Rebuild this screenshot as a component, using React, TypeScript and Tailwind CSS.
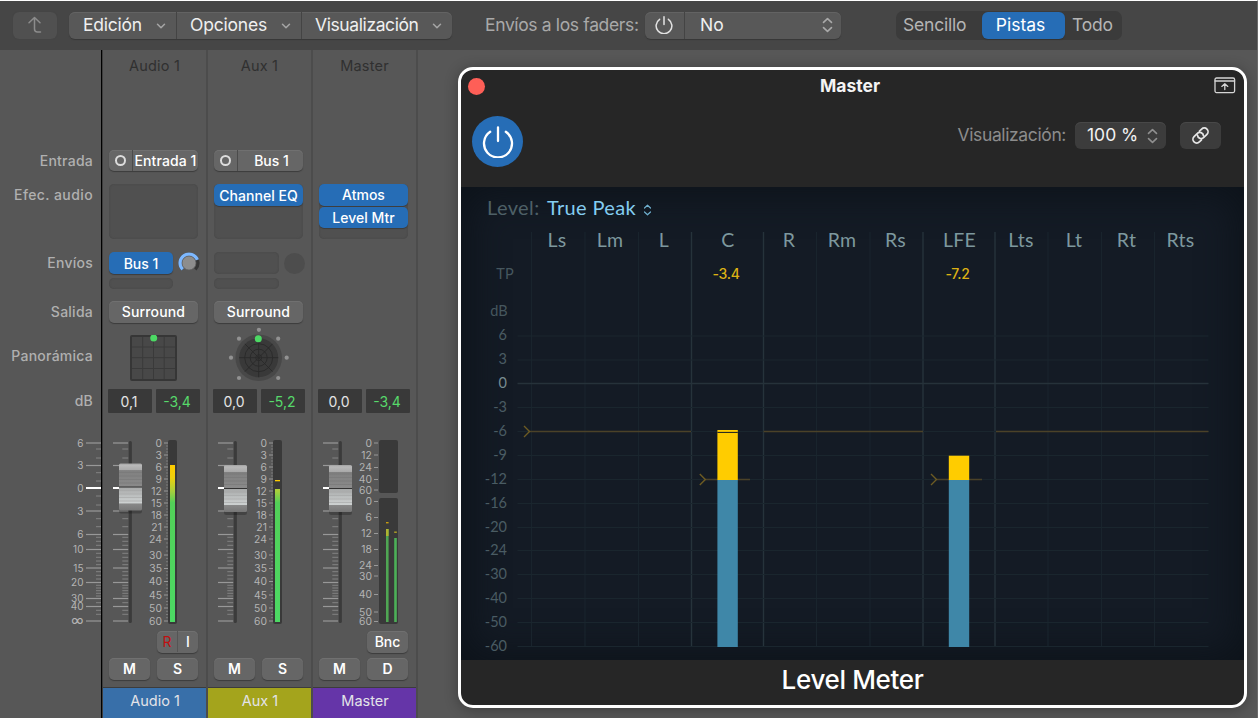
import type { ReactNode } from 'react';
import { ChevronDown } from 'lucide-react';

const ROWS = 'grid grid-rows-[100px_34px_68px_49px_34px_54px_41px_201px_27px_29px_31px]';
const SLOT = 'rounded-[5px] bg-[#505050] shadow-[inset_0_0_2px_#444]';
const BTN = 'flex items-center justify-center rounded-[5px] bg-[#666] text-white shadow-[0_1px_1px_#3c3c3c,inset_0_1px_0_#707070]';
const BLUE = 'flex items-center justify-center rounded-[5px] bg-[#266db6] text-white shadow-[0_1px_1px_#3c3c3c]';

const MAIN_TICKS = [443, 465.5, 488, 511, 534.5, 549.5, 568, 582.5, 598.5, 606.5, 621];
const MINOR_TICKS = [
  449, 458, 472.7, 481, 496, 505, 518.7, 526.7, 537.3, 541.3, 545.3, 553.3, 557.3, 561, 564.7,
  571.7, 575.3, 579, 585.3, 588, 590.7, 593.3, 596, 602.7, 610.3, 614.3,
];
const FADER_LABELS = ['6', '3', '0', '3', '6', '10', '15', '20', '30', '40', '∞'];

type Mark = [string, number];

const CHANNEL_MARKS: Mark[] = [
  ['0', 443], ['3', 455], ['6', 467], ['9', 479], ['12', 491], ['15', 503], ['18', 515], ['21', 527],
  ['24', 539], ['30', 555], ['35', 568.5], ['40', 581.5], ['45', 595], ['50', 608], ['60', 621],
];
const MASTER_MARKS: Mark[] = [
  ['0', 443], ['12', 455], ['24', 467.5], ['40', 479.5], ['60', 490],
  ['0', 501.5], ['6', 517.5], ['12', 533.5], ['18', 549.5], ['24', 565.5], ['30', 576], ['40', 594.5], ['50', 612], ['60', 621.5],
];

const UpDown = ({ className }: { className: string }) => (
  <svg viewBox="0 0 12 18" className={className} fill="none" stroke="currentColor" strokeWidth="1.8" strokeLinecap="round" strokeLinejoin="round">
    <path d="M1.5 6 6 1.8 10.5 6M1.5 12 6 16.2 10.5 12" />
  </svg>
);

const PowerIcon = ({ className, width }: { className: string; width: number }) => (
  <svg viewBox="0 0 32 32" className={className} fill="none" stroke="currentColor" strokeWidth={width} strokeLinecap="round">
    <path d="M16 1.5V15M8.2 5.8A14 14 0 1 0 23.8 5.8" />
  </svg>
);

const TickMarks = ({ from, to, minor }: { from: number; to: number; minor: number }) => (
  <g stroke="#929292" strokeWidth="1">
    {MINOR_TICKS.map(y => <path key={y} d={`M${minor} ${y}H${to}`} stroke="#838383" />)}
    {MAIN_TICKS.map(y => (
      <path key={y} d={`M${from} ${y}H${to}`} stroke={y === 488 ? '#fff' : '#989898'} strokeWidth={y === 488 ? 2 : 1.2} />
    ))}
  </g>
);

const Fader = ({ cap, marks, children }: { cap: number; marks: Mark[]; children: ReactNode }) => (
  <svg viewBox="0 430 103 201" className="h-[201px] w-[103px]">
    <defs>
      <linearGradient id="cap" x1="0" y1="0" x2="0" y2="1">
        <stop offset="0" stopColor="#a2a2a2" />
        <stop offset=".04" stopColor="#b9b9b9" />
        <stop offset=".14" stopColor="#aaa" />
        <stop offset=".15" stopColor="#808080" />
        <stop offset=".49" stopColor="#8a8a8a" />
        <stop offset=".52" stopColor="#a9abab" />
        <stop offset=".84" stopColor="#ced2d2" />
        <stop offset=".86" stopColor="#888" />
        <stop offset="1" stopColor="#777" />
      </linearGradient>
      <linearGradient id="level" gradientUnits="userSpaceOnUse" x1="0" y1="465" x2="0" y2="622">
        <stop offset="0" stopColor="#ffcc00" />
        <stop offset=".08" stopColor="#eed00c" />
        <stop offset=".17" stopColor="#a4cf3e" />
        <stop offset=".24" stopColor="#52d058" />
        <stop offset="1" stopColor="#4cd964" />
      </linearGradient>
    </defs>
    <TickMarks from={10} to={25.3} minor={19.3} />
    <rect x="25.7" y="441" width="3.2" height="182" rx="1.5" fill="#3b3b3b" />
    <rect x="16" y={cap + 3} width="23" height="47" rx="2" fill="#000" opacity=".22" />
    <rect x="16" y={cap} width="23" height="47" rx="1.5" fill="url(#cap)" />
    {[9, 12.5, 16, 19.5].map(d => <path key={d} d={`M16 ${cap + d}h23`} stroke="#777" strokeWidth=".6" />)}
    {[27, 30.5, 34, 37.5].map(d => <path key={d} d={`M16 ${cap + d}h23`} stroke="#a4a6a6" strokeWidth=".6" />)}
    <path d={`M16 ${cap + 23.5}h23`} stroke="#333" />
    {marks.map(([label, y]) => (
      <g key={y}>
        <text x="59" y={y + 3.7} textAnchor="end" fill="#b4b4b4" fontSize="10.3" letterSpacing=".1">{label}</text>
        <path d={`M61 ${y}h4`} stroke="#999" />
      </g>
    ))}
    {children}
  </svg>
);

const ChannelMeter = ({ top, peak }: { top: number; peak?: number }) => (
  <>
    {CHANNEL_MARKS.slice(1).flatMap(([, y], i) => {
      const prev = CHANNEL_MARKS[i][1];
      return [0.25, 0.5, 0.75].map(t => <path key={`${y}-${t}`} d={`M63 ${prev + (y - prev) * t}h2`} stroke="#858585" strokeWidth=".8" />);
    })}
    <rect x="65" y="440" width="9" height="184" rx="2" fill="#393939" />
    <rect x="67" y={top} width="5" height={622 - top} fill="url(#level)" />
    {peak && <rect x="67" y={peak} width="5" height="1.3" fill="#ffcc00" />}
  </>
);

const Strip = ({ name, color, input, fx, sends, output, pan, gain, peak, fader, top, mute }: {
  name: string; color: string; input?: ReactNode; fx: ReactNode; sends?: ReactNode; output?: string;
  pan?: ReactNode; gain: string; peak: string; fader: ReactNode; top?: ReactNode; mute: string;
}) => (
  <div className={`${ROWS} w-[105px] shrink-0 border-r-2 border-[#4c4c4c] text-[14px]`}>
    <div className="flex h-8 items-center justify-center text-[14.5px] tracking-[0.2px] text-[#303030]">{name}</div>
    <div className="pl-1.5">{input}</div>
    <div className="pl-1.5">{fx}</div>
    <div className="pl-1.5">{sends}</div>
    <div className="pl-1.5">{output && <div className={`${BTN} h-[22px] w-[89px] pb-px font-medium tracking-[0.15px]`}>{output}</div>}</div>
    <div>{pan}</div>
    <div className="flex gap-[3.5px] pl-[5px] text-[14px]">
      <div className="flex h-6 w-11 items-center justify-center rounded-[1px] bg-[#393939] pr-0.5 text-[#e4e4e4]">{gain}</div>
      <div className="flex h-6 w-11 items-center justify-center rounded-[1px] bg-[#393939] pr-px text-[#57d96b]">{peak}</div>
    </div>
    {fader}
    <div className="flex pl-[54px]">{top}</div>
    <div className="flex gap-[7px] pl-1.5 font-semibold">
      <div className={`${BTN} h-[22px] w-[41px] pb-px`}>M</div>
      <div className={`${BTN} h-[22px] w-[41px] pb-px`}>{mute}</div>
    </div>
    <div className={`flex items-center justify-center border-t border-[#3c3c3c] pb-1 pl-px text-[14.5px] text-[#e3e3e8] ${color}`}>{name}</div>
  </div>
);

const Input = ({ label, className }: { label: string; className: string }) => (
  <div className={`${BTN} h-[21px] w-[89px] overflow-hidden`}>
    <div className="flex h-full w-6 shrink-0 items-center justify-center border-r border-[#4b4b4b]">
      <div className="size-[10.5px] rounded-full border-2 border-[#dcdcdc]" />
    </div>
    <div className={`flex-1 text-center font-medium whitespace-nowrap ${className}`}>{label}</div>
  </div>
);

const SquarePanner = () => (
  <svg viewBox="0 0 103 54" className="h-[54px] w-[103px]">
    <rect x="28" y="1" width="45" height="44" rx="1" fill="#484848" stroke="#363636" strokeWidth="2" />
    <path d="M39.7 2v42M50.5 2v42M61.2 2v42M29 12h43M29 22.7h43M29 33.5h43" stroke="#3a3a3a" />
    <circle cx="50.7" cy="3" r="3.5" fill="#4cd964" />
  </svg>
);

const RoundPanner = () => (
  <svg viewBox="0 0 103 54" className="h-[54px] w-[103px] overflow-visible">
    <circle cx="50.7" cy="22.7" r="23.3" fill="#484848" />
    <circle cx="50.7" cy="22.7" r="19.5" fill="#393939" />
    <g fill="none" stroke="#292929" strokeWidth=".9">
      <circle cx="50.7" cy="22.7" r="3" />
      <circle cx="50.7" cy="22.7" r="8.5" />
      <circle cx="50.7" cy="22.7" r="14" />
      <path d="M50.7 3.2v39M31.2 22.7h39M36.9 8.9l27.6 27.6M64.5 8.9 36.9 36.5" />
    </g>
    <g fill="#929292">
      {[[50.9, -5.2], [31, 3.7], [70.2, 3.7], [23, 22.7], [78.7, 22.7], [31, 43], [70.2, 43]].map(([x, y]) => (
        <circle key={`${x}${y}`} cx={x} cy={y} r="2.1" />
      ))}
    </g>
    <circle cx="50.3" cy="3.7" r="3.5" fill="#4cd964" />
  </svg>
);

const SEND_KNOB = (
  <svg viewBox="0 0 24 24" className="size-6">
    <circle cx="12" cy="12" r="8.8" fill="none" stroke="#363636" strokeWidth="3.6" pathLength="360" strokeDasharray="270 90" transform="rotate(135 12 12)" />
    <circle cx="12" cy="12" r="8.8" fill="none" stroke="#7db8ff" strokeWidth="3.6" pathLength="360" strokeDasharray="205 155" transform="rotate(135 12 12)" />
    <circle cx="12" cy="12" r="7" fill="#8d8d8d" stroke="#5c5c5c" strokeWidth=".7" />
  </svg>
);

const Toolbar = () => (
  <div className="flex h-[49px] shrink-0 items-center bg-[#464646] pb-px pl-[13px] text-[17.5px] text-[#efefef]">
    <div className="flex h-[27px] w-11 items-center justify-center rounded-md bg-[#505050] shadow-[0_0_1px_#404040]">
      <svg viewBox="0 0 16 18" className="h-[18px] w-4" fill="none" stroke="#8c8c8c" strokeWidth="1.5" strokeLinecap="round" strokeLinejoin="round">
        <path d="M2 6.8 7.5 1.5 13 6.8M7.5 2v11q0 3 3 3H13.5" />
      </svg>
    </div>
    <div className="ml-3 flex h-[27px] w-[383px] rounded-md bg-[#585858] shadow-[0_1px_1px_#373737,inset_0_1px_0_#636363]">
      {[
        { label: 'Edición', className: 'w-[107px] pl-[14px] tracking-[-0.25px]' },
        { label: 'Opciones', className: 'w-[125px] border-l border-[#444] pl-[13px] tracking-[-0.2px]' },
        { label: 'Visualización', className: 'w-[151px] border-l border-[#444] pl-[13px] tracking-[-0.4px]' },
      ].map(item => (
        <div key={item.label} className={`flex items-center justify-between pr-2 ${item.className}`}>
          {item.label}
          <ChevronDown size={14} strokeWidth={2.6} className="mt-0.5 shrink-0 text-[#a5a5a5]" />
        </div>
      ))}
    </div>
    <div className="ml-[33px] w-[160px] tracking-[-0.36px] whitespace-nowrap text-[#a9a9a9]">Envíos a los faders:</div>
    <div className="flex h-[27px] w-[196px] items-center rounded-md bg-[#585858] shadow-[0_1px_1px_#373737,inset_0_1px_0_#636363]">
      <div className="flex h-full w-10 items-center justify-center border-r border-[#444] pr-px">
        <PowerIcon className="size-[18px] text-[#e2e2e2]" width={2.7} />
      </div>
      <div className="flex-1 pl-[15px]">No</div>
      <UpDown className="mr-2 h-4 w-[11px] text-[#a9a9a9]" />
    </div>
    <div className="ml-[55px] flex h-[29px] w-[226px] items-center rounded-[7px] bg-[#3b3b3b] pl-[7px] text-[#b5b5b5]">
      <div className="w-[79px] tracking-[-0.2px]">Sencillo</div>
      <div className="flex h-[27px] w-[83px] items-center justify-center rounded-md bg-[#266db6] pr-1.5 text-white shadow-[0_1px_1px_#333]">Pistas</div>
      <div className="pl-[7px] tracking-[-0.2px]">Todo</div>
    </div>
  </div>
);

const COLUMNS: [string, number][] = [
  ['Ls', 557], ['Lm', 610], ['L', 664], ['C', 728], ['R', 789], ['Rm', 842],
  ['Rs', 895.5], ['LFE', 959.5], ['Lts', 1021], ['Lt', 1074], ['Rt', 1126.5], ['Rts', 1180.5],
];
const DB_LINES: Mark[] = [
  ['6', 336], ['3', 360], ['0', 383.5], ['-3', 407.5], ['-6', 431.5], ['-9', 455.5], ['-12', 479.5],
  ['-16', 503.5], ['-20', 527.5], ['-24', 550.5], ['-30', 574.5], ['-40', 598.5], ['-50', 622.5], ['-60', 646.5],
];
const GRID_X = [531.5, 585, 638.5, 691.5, 763.5, 816.5, 870, 923, 995, 1048, 1101.5, 1154.5];
const STRONG_X = [691.5, 763.5, 923, 995];

const LevelPlot = () => (
  <svg viewBox="461 224 783 436" className="h-[436px] w-[783px] font-[Lato,sans-serif]">
    {GRID_X.map(x => <path key={x} d={`M${x} 232V647`} stroke={STRONG_X.includes(x) ? '#26333b' : '#19242d'} strokeWidth={STRONG_X.includes(x) ? 1.4 : 1.2} />)}
    {DB_LINES.map(([label, y]) => (
      <g key={label}>
        <path d={`M517.5 ${y}H1208.5`} stroke={label === '0' ? '#26323a' : '#1a262e'} strokeWidth={label === '0' ? 1.6 : 1} />
        <text x="507" y={y + 4.2} textAnchor="end" fill={label === '0' ? '#788c91' : '#4a5c63'} fontSize="14.5">{label}</text>
      </g>
    ))}
    <g fill="#46575e" fontSize="14.5">
      <text x="505" y="279" textAnchor="middle">TP</text>
      <text x="499" y="316" textAnchor="middle">dB</text>
    </g>
    <g fill="#7d989e" fontSize="19.5" textAnchor="middle" letterSpacing=".3">
      {COLUMNS.map(([label, x]) => <text key={label} x={x} y="247">{label}</text>)}
    </g>
    <g fill="#dcb114" fontSize="14" fontWeight="500" textAnchor="middle" letterSpacing="-.3" className="font-[Inter,sans-serif]">
      <text x="726" y="279">-3.4</text>
      <text x="957.5" y="279">-7.2</text>
    </g>
    <g fill="none" stroke="#4b4228" strokeWidth="1.4">
      <path d="M529 431.5H691M763.5 431.5H923M996 431.5h212.5M705 479.5h45M936.5 479.5H982" />
      <path d="m524 426 5.5 5.5-5.5 5.5M699.8 474l5.5 5.5-5.5 5.5M931 474l5.5 5.5-5.5 5.5" stroke="#6d5b23" />
    </g>
    <rect x="717.4" y="430" width="20.4" height="50" fill="#ffcc00" />
    <rect x="717.4" y="431.9" width="20.4" height="1" fill="#141b25" />
    <rect x="717.4" y="480" width="20.4" height="167" fill="#3f87a8" />
    <rect x="948.8" y="455.7" width="20.4" height="24.3" fill="#ffcc00" />
    <rect x="948.8" y="480" width="20.4" height="167" fill="#3f87a8" />
  </svg>
);

const PluginWindow = () => (
  <div className="mt-[17px] ml-10 flex h-[641px] w-[789px] shrink-0 flex-col overflow-hidden rounded-[15px] border-[3px] border-white bg-[#262626] shadow-[0_2px_14px_rgba(0,0,0,0.3)]">
    <div className="grid h-[33px] grid-cols-[1fr_auto_1fr] items-center px-[7px]">
      <div className="size-[17px] rounded-full bg-[#fe5f57]" />
      <div className="mr-[5px] text-[17.5px] font-bold text-[#f4f4f4]">Master</div>
      <svg viewBox="0 0 22 17" className="mr-px mb-[3px] h-[17px] w-[22px] justify-self-end" fill="none" stroke="#d5d5d5" strokeWidth="1.3" strokeLinecap="round" strokeLinejoin="round">
        <rect x="1" y="1" width="19.6" height="14.6" rx="1.5" />
        <path d="M1 4h19.6M10.8 12.5V6.8M7.8 9.4l3-2.7 3 2.7" />
      </svg>
    </div>
    <div className="flex h-[84px] pt-[13px] pl-[11px]">
      <div className="flex size-[51px] items-center justify-center rounded-full bg-[#266db6]">
        <PowerIcon className="size-8 text-white" width={2.3} />
      </div>
      <div className="mt-[6px] ml-auto flex h-[27px] items-center pr-[23px] text-[17.5px]">
        <span className="mr-[9px] tracking-[-0.38px] text-[#8c8c8c]">Visualización:</span>
        <div className="flex h-[27px] w-[91px] items-center justify-between rounded-md bg-[#3c3c3c] pr-2 pl-3 text-[#f2f2f2] shadow-[inset_0_1px_0_#484848]">
          <span className="whitespace-nowrap">100 %</span>
          <UpDown className="h-4 w-[11px] text-[#8f8f8f]" />
        </div>
        <div className="ml-3.5 flex h-[27px] w-[41px] items-center justify-center rounded-md bg-[#3c3c3c] shadow-[inset_0_1px_0_#484848]">
          <svg viewBox="0 0 24 24" className="size-[23px]" fill="none" stroke="#e5e5e5" strokeWidth="1.8" strokeLinecap="round">
            <g transform="rotate(-45 12 12)">
              <path d="M9.6 15.9H6.4a3.9 3.9 0 0 1 0-7.8H11a3.9 3.9 0 0 1 3 6.4" />
              <path d="M14.4 8.1h3.2a3.9 3.9 0 0 1 0 7.8H13a3.9 3.9 0 0 1-3-6.4" />
            </g>
          </svg>
        </div>
      </div>
    </div>
    <div className="h-[473px] bg-[#141b25] shadow-[inset_0_0_36px_8px_#0d131a]">
      <div className="flex h-[37px] items-center pt-[3px] pl-[26px] font-[Lato,sans-serif] text-[20px]">
        <span className="w-[60px] tracking-[0.4px] text-[#4e6067]">Level:</span>
        <span className="tracking-[0.35px] text-[#84cdf1]">True Peak</span>
        <UpDown className="mt-[5px] ml-[7px] h-3 w-[9px] text-[#6fb0cf]" />
      </div>
      <LevelPlot />
    </div>
    <div className="flex flex-1 items-center justify-center pb-1.5 text-[26px] font-medium tracking-[-0.35px] text-white">Level Meter</div>
  </div>
);

export default function App() {
  return (
    <div className="flex h-[718px] w-[1258px] flex-col overflow-hidden border-t border-r border-t-white border-r-[#6a6a6a] bg-[#575757] font-[Inter,sans-serif]">
      <Toolbar />
      <div className="flex h-[668px]">
        <div className={`${ROWS} w-[101px] shrink-0 text-right text-[14px] leading-[22px] font-medium tracking-[0.25px] text-[#b0b0b0]`}>
          <div />
          <div className="pr-2">Entrada</div>
          <div className="pr-2 tracking-[0.4px]">Efec. audio</div>
          <div className="pr-2">Envíos</div>
          <div className="pr-2">Salida</div>
          <div className="pt-2.5 pr-2">Panorámica</div>
          <div className="pt-px pr-2">dB</div>
          <svg viewBox="0 430 101 201" className="h-[201px] w-[101px]">
            <TickMarks from={86} to={101} minor={96} />
            {FADER_LABELS.map((label, i) => (
              <text key={i} x="83.5" y={MAIN_TICKS[i] + 3.7} textAnchor="end" fill="#b4b4b4" fontSize={label === '∞' ? 13 : 10} fontWeight="400" letterSpacing="0">{label}</text>
            ))}
          </svg>
        </div>
        <div className="w-0.5 shrink-0 border-l border-black bg-[#3d3d3d]" />
        <Strip
          name="Audio 1"
          color="bg-[#386fa9]"
          input={<Input label="Entrada 1" className="tracking-[0.1px]" />}
          fx={<div className={`${SLOT} h-[55px] w-[89px]`} />}
          sends={
            <>
              <div className="flex h-[22px] items-center">
                <div className={`${BLUE} h-[22px] w-16 font-medium`}>Bus 1</div>
                <div className="ml-1">{SEND_KNOB}</div>
              </div>
              <div className={`${SLOT} mt-1 h-[11px] w-16`} />
            </>
          }
          output="Surround"
          pan={<SquarePanner />}
          gain="0,1"
          peak="-3,4"
          fader={<Fader cap={463.5} marks={CHANNEL_MARKS}><ChannelMeter top={465} /></Fader>}
          top={
            <div className={`${BTN} h-[22px] w-[41px] pb-px`}>
              <div className="flex h-full w-[21px] items-center justify-center border-r border-[#555] text-[#c01010]">R</div>
              <div className="flex-1 text-center font-medium">I</div>
            </div>
          }
          mute="S"
        />
        <Strip
          name="Aux 1"
          color="bg-[#a4a41c]"
          input={<Input label="Bus 1" className="pl-0.5" />}
          fx={
            <div className={`${SLOT} h-[55px] w-[89px]`}>
              <div className={`${BLUE} h-[22px] font-medium tracking-[0.05px] whitespace-nowrap`}>Channel EQ</div>
            </div>
          }
          sends={
            <>
              <div className="flex h-[22px] items-center gap-[5px]">
                <div className={`${SLOT} h-[22px] w-[65px]`} />
                <div className="size-[21px] rounded-full bg-[#4d4d4d]" />
              </div>
              <div className={`${SLOT} mt-1 h-[11px] w-[65px]`} />
            </>
          }
          output="Surround"
          pan={<RoundPanner />}
          gain="0,0"
          peak="-5,2"
          fader={<Fader cap={465} marks={CHANNEL_MARKS}><ChannelMeter top={489} peak={480} /></Fader>}
          mute="S"
        />
        <Strip
          name="Master"
          color="bg-[#6535a8]"
          fx={
            <div className={`${SLOT} flex h-[55px] w-[89px] flex-col gap-px font-medium`}>
              <div className={`${BLUE} h-[21.5px]`}>Atmos</div>
              <div className={`${BLUE} h-[21.5px]`}>Level Mtr</div>
            </div>
          }
          gain="0,0"
          peak="-3,4"
          fader={
            <Fader cap={465} marks={MASTER_MARKS}>
              <rect x="66" y="440" width="19" height="53" rx="2" fill="#393939" />
              <rect x="66" y="498" width="19" height="126" rx="2" fill="#393939" />
              <rect x="73" y="529" width="2.6" height="93" fill="#4fa553" />
              <rect x="73" y="529" width="2.6" height="7" fill="#aeb330" />
              <rect x="81.2" y="538" width="2.6" height="84" fill="#4cb058" />
              <rect x="73" y="522" width="2.6" height="1.4" fill="#c79c10" />
              <rect x="81.2" y="531.5" width="2.6" height="1.4" fill="#b3a325" />
            </Fader>
          }
          top={<div className={`${BTN} h-[22px] w-[41px] pb-px font-medium`}>Bnc</div>}
          mute="D"
        />
        <PluginWindow />
      </div>
    </div>
  );
}
